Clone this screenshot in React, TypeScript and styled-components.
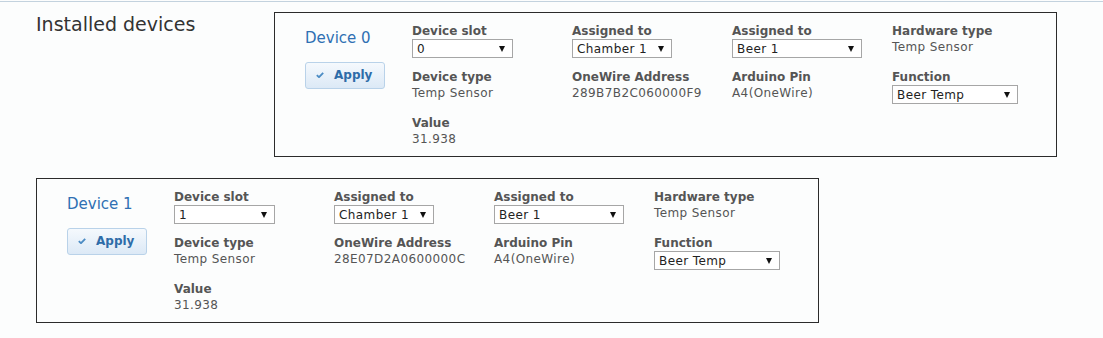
import styled, { createGlobalStyle } from 'styled-components';

const GlobalStyle = createGlobalStyle`
  body {
    margin: 0;
    background: #fcfdfd;
    font-family: 'DejaVu Sans', Verdana, sans-serif;
  }
`;

const Page = styled.div`
  padding-top: 1px;
`;

const TopRule = styled.div`
  border-top: 1px solid #c3d2de;
`;

const Devices = styled.div`
  display: flex;
  flex-wrap: wrap;
  row-gap: 21px;
  padding: 10px 0 0 36px;
`;

const Heading = styled.h2`
  width: 238px;
  margin: 0;
  font-size: 19px;
  font-weight: normal;
  line-height: 24px;
  color: #333;
`;

const Card = styled.div`
  box-sizing: border-box;
  width: 783px;
  height: 145px;
  border: 1px solid #2b2b2b;
  padding: 10px 0 0 30px;
  display: grid;
  grid-template-columns: 107px repeat(4, 160px);
  grid-auto-rows: auto;
  row-gap: 11px;
  align-items: start;
  align-content: start;
`;

const Side = styled.div`
  grid-row: 1 / span 3;
  display: flex;
  flex-direction: column;
  align-items: flex-start;
`;

const DeviceName = styled.div`
  margin-top: 5px;
  font-size: 15px;
  line-height: 20px;
  color: #2f70b3;
`;

const ApplyButton = styled.button`
  margin-top: 14px;
  box-sizing: border-box;
  width: 80px;
  height: 27px;
  display: flex;
  align-items: center;
  gap: 10px;
  padding: 0 0 1px 10px;
  border: 1px solid #b9d2e9;
  border-radius: 3px;
  background: linear-gradient(#f5f9fd, #dce9f6);
  color: #2e6ca8;
  font-family: inherit;
  font-size: 12px;
  font-weight: bold;
`;

const Field = styled.div`
  display: flex;
  flex-direction: column;
  align-items: flex-start;
`;

const Label = styled.div`
  font-size: 12px;
  font-weight: bold;
  line-height: 16px;
  color: #555;
`;

const Value = styled.div`
  font-size: 12px;
  line-height: 16px;
  letter-spacing: 0.4px;
  color: #555;
`;

const SelectWrap = styled.div<{ w: number }>`
  position: relative;
  width: ${({ w }) => w}px;
  height: 19px;

  &::after {
    content: '';
    position: absolute;
    right: 8px;
    top: 7px;
    border-left: 3.5px solid transparent;
    border-right: 3.5px solid transparent;
    border-top: 6px solid #111;
    pointer-events: none;
  }
`;

const Select = styled.select`
  appearance: none;
  display: block;
  box-sizing: border-box;
  width: 100%;
  height: 19px;
  margin: 0;
  padding: 0 0 0 4px;
  border: 1px solid #a6a6a6;
  border-radius: 0;
  background: #fff;
  font-family: inherit;
  font-size: 12px;
  letter-spacing: 0.4px;
  color: #222;
`;

function Check() {
  return (
    <svg width="8" height="6" viewBox="0 0 8 6">
      <path d="M0.8 3.2 L3 5.2 L7.2 0.8" fill="none" stroke="#4c8cc4" strokeWidth="1.8" />
    </svg>
  );
}

function Dropdown({ w, value }: { w: number; value: string }) {
  return (
    <SelectWrap w={w}>
      <Select defaultValue={value}>
        <option>{value}</option>
      </Select>
    </SelectWrap>
  );
}

type Device = { id: number; address: string; value: string };

const devices: Device[] = [
  { id: 0, address: '289B7B2C060000F9', value: '31.938' },
  { id: 1, address: '28E07D2A0600000C', value: '31.938' },
];

function DeviceCard({ device }: { device: Device }) {
  return (
    <Card>
      <Side>
        <DeviceName>Device {device.id}</DeviceName>
        <ApplyButton>
          <Check />
          Apply
        </ApplyButton>
      </Side>
      <Field>
        <Label>Device slot</Label>
        <Dropdown w={101} value={String(device.id)} />
      </Field>
      <Field>
        <Label>Assigned to</Label>
        <Dropdown w={100} value="Chamber 1" />
      </Field>
      <Field>
        <Label>Assigned to</Label>
        <Dropdown w={130} value="Beer 1" />
      </Field>
      <Field>
        <Label>Hardware type</Label>
        <Value>Temp Sensor</Value>
      </Field>
      <Field>
        <Label>Device type</Label>
        <Value>Temp Sensor</Value>
      </Field>
      <Field>
        <Label>OneWire Address</Label>
        <Value>{device.address}</Value>
      </Field>
      <Field>
        <Label>Arduino Pin</Label>
        <Value>A4(OneWire)</Value>
      </Field>
      <Field>
        <Label>Function</Label>
        <Dropdown w={126} value="Beer Temp" />
      </Field>
      <Field>
        <Label>Value</Label>
        <Value>{device.value}</Value>
      </Field>
    </Card>
  );
}

export default function App() {
  return (
    <Page>
      <GlobalStyle />
      <TopRule />
      <Devices>
        <Heading>Installed devices</Heading>
        {devices.map((d) => (
          <DeviceCard key={d.id} device={d} />
        ))}
      </Devices>
    </Page>
  );
}
